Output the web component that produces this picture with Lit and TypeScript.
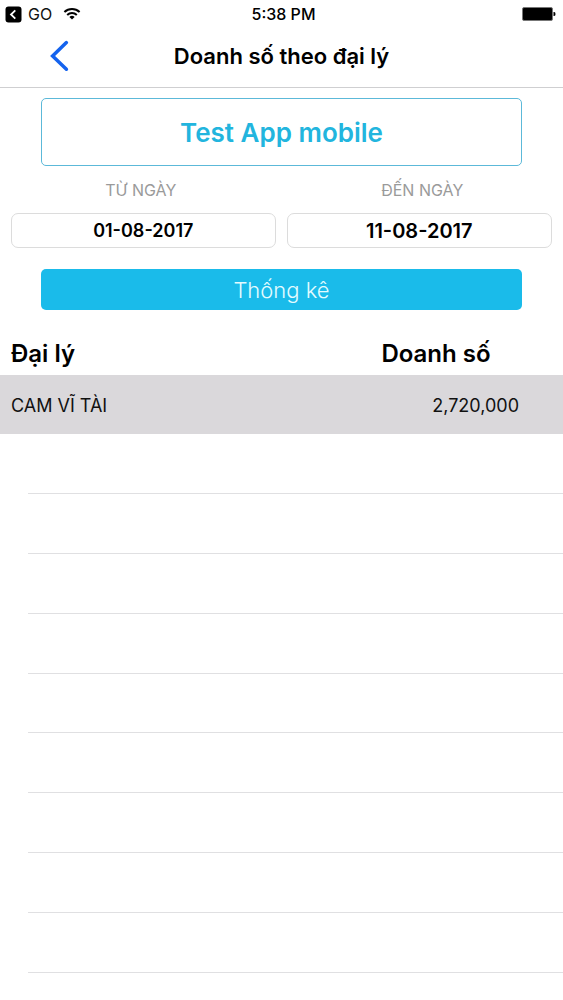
import { LitElement, html, css } from "lit";
import { customElement, property } from "lit/decorators.js";

interface AgentSales {
  agent: string;
  sales: number;
}

@customElement("status-bar")
export class StatusBar extends LitElement {
  static styles = css`
    :host {
      display: grid;
      grid-template-columns: 1fr auto 1fr;
      align-items: center;
      height: 28px;
      padding: 0 7px 0 5px;
      font-size: 16px;
      line-height: 20px;
    }
    .left {
      display: flex;
      align-items: center;
    }
    .back-app {
      display: flex;
      align-items: center;
      gap: 6px;
      color: #111;
      text-decoration: none;
    }
    .wifi {
      margin-left: 11px;
    }
    .time {
      font-weight: 500;
      padding-left: 6px;
    }
    .battery {
      justify-self: end;
    }
    svg {
      display: block;
    }
  `;

  render() {
    return html`
      <div class="left">
        <a class="back-app" href="#">
          <svg width="17" height="17" viewBox="0 0 17 17" aria-hidden="true">
            <rect x="0.5" y="0.5" width="16" height="16" rx="3" fill="#000" />
            <path d="M10.3 4.3 6 8.5l4.3 4.2" fill="none" stroke="#fff" stroke-width="1.8" />
          </svg>
          GO
        </a>
        <svg class="wifi" width="18" height="14" viewBox="0 0 18 14" role="img" aria-label="Wi-Fi">
          <g fill="none" stroke="#000" stroke-width="2">
            <path d="M1.4 4.9a11.2 11.2 0 0 1 15.2 0" />
            <path d="M4.2 7.9a7 7 0 0 1 9.6 0" />
          </g>
          <path d="M9 12.6 6.4 9.9a4 4 0 0 1 5.2 0z" fill="#000" />
        </svg>
      </div>
      <span class="time">5:38 PM</span>
      <svg class="battery" width="34" height="14" viewBox="0 0 34 14" role="img" aria-label="Pin">
        <rect x="0.5" y="0.5" width="30" height="13" rx="1.5" fill="#000" stroke="#777" />
        <path d="M31.5 5h.7a1.3 2 0 0 1 0 4h-.7z" fill="#000" />
      </svg>
    `;
  }
}

@customElement("nav-header")
export class NavHeader extends LitElement {
  @property() heading = "";

  static styles = css`
    :host {
      display: grid;
      box-sizing: border-box;
      grid-template-columns: 80px 1fr 80px;
      align-items: center;
      height: 60px;
      padding-bottom: 3px;
      border-bottom: 1px solid #cfcfd1;
    }
    .back {
      display: flex;
      justify-content: flex-end;
      padding: 0 10px 0 0;
      border: 0;
      background: none;
    }
    .title {
      margin: 0;
      font-size: 22px;
      line-height: 28px;
      font-weight: 600;
      text-align: center;
      white-space: nowrap;
    }
  `;

  render() {
    return html`
      <button class="back" type="button" aria-label="Quay lại">
        <svg width="20" height="32" viewBox="0 0 20 32" aria-hidden="true">
          <path
            d="M16.4 2.6 2.6 16l13.8 13.2"
            fill="none"
            stroke="#1563ee"
            stroke-width="3.5"
            stroke-linecap="round"
          />
        </svg>
      </button>
      <h1 class="title">${this.heading}</h1>
    `;
  }
}

@customElement("sales-filter")
export class SalesFilter extends LitElement {
  static styles = css`
    .form {
      display: flex;
      flex-direction: column;
    }
    .store,
    .submit {
      margin: 0 41px;
      font-family: inherit;
      border-radius: 5px;
    }
    .store {
      margin-top: 10px;
      height: 68px;
      border: 1px solid #5cb9d9;
      background: #fff;
      color: #22b5de;
      font-size: 26px;
      font-weight: 600;
    }
    .dates {
      display: grid;
      grid-template-columns: 1fr 1fr;
      margin-top: 14px;
    }
    .field {
      display: flex;
      flex-direction: column;
      gap: 12px;
      min-width: 0;
    }
    .label {
      color: #9a9a9a;
      font-size: 16px;
      line-height: 21px;
      text-align: center;
    }
    .input {
      box-sizing: border-box;
      min-width: 0;
      height: 35px;
      margin: 0 6px 0 11px;
      padding: 0;
      border: 1px solid #dcdcdc;
      border-radius: 7px;
      background: #fff;
      color: #000;
      font-family: inherit;
      font-size: 18px;
      font-weight: 600;
      text-align: center;
    }
    .end .input {
      margin: 0 11px 0 5px;
      font-size: 20px;
    }
    .submit {
      margin-top: 21px;
      height: 41px;
      border: 0;
      background: #1abbea;
      color: #e4fbff;
      font-size: 22px;
      font-weight: 300;
    }
  `;

  render() {
    return html`
      <form class="form" @submit=${(e: Event) => e.preventDefault()}>
        <button class="store" type="button">Test App mobile</button>
        <div class="dates">
          <div class="field">
            <label class="label" for="from">TỪ NGÀY</label>
            <input class="input" id="from" type="text" value="01-08-2017" />
          </div>
          <div class="field end">
            <label class="label" for="to">ĐẾN NGÀY</label>
            <input class="input" id="to" type="text" value="11-08-2017" />
          </div>
        </div>
        <button class="submit" type="submit">Thống kê</button>
      </form>
    `;
  }
}

@customElement("sales-table")
export class SalesTable extends LitElement {
  @property({ attribute: false }) rows: AgentSales[] = [];
  @property({ type: Number }) blanks = 9;

  static styles = css`
    :host {
      display: flex;
      flex-direction: column;
      flex: 1;
    }
    .table {
      width: 100%;
      border-collapse: collapse;
      table-layout: fixed;
    }
    .agent {
      padding: 2px 0 0 11px;
      font-weight: inherit;
      text-align: left;
    }
    .sales {
      width: 166px;
      padding: 2px 44px 0 0;
      font-weight: inherit;
      text-align: right;
    }
    .head {
      height: 44px;
      font-size: 24px;
      line-height: 30px;
      font-weight: 600;
    }
    .head .sales {
      text-align: center;
    }
    .row {
      height: 59px;
      background: #dad8db;
      color: #111;
      font-size: 18px;
      line-height: 24px;
    }
    .blanks {
      display: flex;
      flex-direction: column;
      flex: 1;
      padding: 0 0 27px 28px;
    }
    .blank {
      flex: 1 0 24px;
      border-bottom: 1px solid #e0e0e2;
    }
  `;

  render() {
    return html`
      <table class="table">
        <thead>
          <tr class="head">
            <th class="agent" scope="col">Đại lý</th>
            <th class="sales" scope="col">Doanh số</th>
          </tr>
        </thead>
        <tbody>
          ${this.rows.map(
            (r) => html`
              <tr class="row">
                <td class="agent">${r.agent}</td>
                <td class="sales">${r.sales.toLocaleString("en-US")}</td>
              </tr>
            `
          )}
        </tbody>
      </table>
      <div class="blanks" aria-hidden="true">
        ${Array.from({ length: this.blanks }, () => html`<div class="blank"></div>`)}
      </div>
    `;
  }
}

@customElement("app-root")
export class AppRoot extends LitElement {
  private rows: AgentSales[] = [{ agent: "CAM VĨ TÀI", sales: 2720000 }];

  static styles = css`
    :host {
      display: flex;
      flex-direction: column;
      min-height: 100vh;
      background: #fff;
      color: #000;
      font-family: Inter, "Noto Sans", sans-serif;
    }
    .results {
      margin-top: 21px;
    }
  `;

  render() {
    return html`
      <status-bar></status-bar>
      <nav-header heading="Doanh số theo đại lý"></nav-header>
      <sales-filter></sales-filter>
      <sales-table class="results" .rows=${this.rows}></sales-table>
    `;
  }
}
